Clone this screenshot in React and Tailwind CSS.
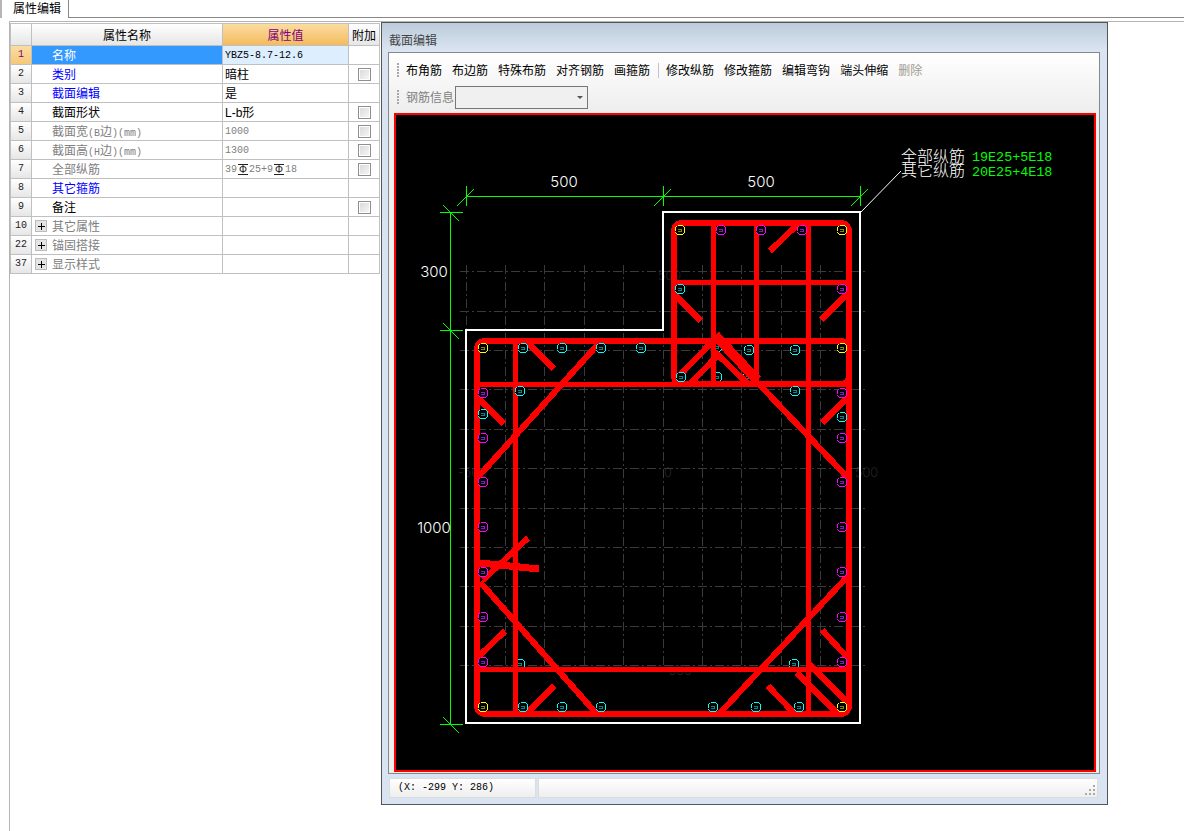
import React from "react";

const CJK = "font-['Liberation_Sans','Noto_Sans_CJK_SC',sans-serif]";
const MONO = "text-[10px] font-['Liberation_Mono',monospace]";

const rows = [
  { no: "1", name: "名称", value: "YBZ5-8.7-12.6", mono: true, selected: true },
  { no: "2", name: "类别", tone: "blue", value: "暗柱", check: true },
  { no: "3", name: "截面编辑", tone: "blue", value: "是" },
  { no: "4", name: "截面形状", value: "L-b形", check: true },
  { no: "5", name: ["截面宽", "(B", "边", ")(mm)"], tone: "gray", value: "1000", gray: true, check: true },
  { no: "6", name: ["截面高", "(H", "边", ")(mm)"], tone: "gray", value: "1300", gray: true, check: true },
  { no: "7", name: "全部纵筋", tone: "gray", rebar: true, check: true },
  { no: "8", name: "其它箍筋", tone: "blue" },
  { no: "9", name: "备注", check: true },
  { no: "10", name: "其它属性", tone: "gray", plus: true },
  { no: "22", name: "锚固搭接", tone: "gray", plus: true },
  { no: "37", name: "显示样式", tone: "gray", plus: true },
];

const tools = ["布角筋", "布边筋", "特殊布筋", "对齐钢筋", "画箍筋"];
const tools2 = ["修改纵筋", "修改箍筋", "编辑弯钩", "端头伸缩"];

// [x1, y1, x2, y2, width]
const bars = [
  [515, 341, 515, 714, 5],
  [713, 223, 713, 384, 5],
  [756, 223, 756, 384, 5],
  [808, 223, 808, 714, 5],
  [674, 282, 849, 282, 5],
  [477, 384, 849, 384, 5],
  [477, 669, 849, 669, 5],
  [770, 251, 797, 225, 5],
  [675, 295, 701, 321, 5],
  [821, 320, 848, 293, 5],
  [528, 343, 554, 369, 5],
  [478, 398, 504, 424, 5],
  [822, 423, 848, 397, 5],
  [600, 342, 478, 477, 5],
  [758, 383, 848, 478, 5],
  [677, 378, 713, 341, 5],
  [690, 384, 718, 355, 5],
  [715, 352, 748, 384, 5],
  [715, 335, 757, 380, 9],
  [480, 582, 595, 712, 5],
  [720, 713, 847, 577, 5],
  [478, 657, 505, 631, 5],
  [528, 712, 554, 686, 5],
  [480, 563, 539, 569, 6],
  [483, 580, 528, 538, 5],
  [768, 686, 793, 712, 5],
  [797, 673, 837, 713, 5],
  [808, 663, 848, 703, 5],
  [822, 630, 847, 657, 5],
];

const yellow = [[483, 348], [680, 230], [842, 230], [842, 348], [483, 707], [842, 707]];
const cyan = [
  [523, 348], [562, 348], [601, 348], [641, 348], [680, 289], [749, 350], [795, 350],
  [681, 377], [795, 391], [483, 414], [842, 417], [520, 391], [523, 707], [562, 707],
  [601, 707], [713, 707], [756, 707], [799, 707],
];
const cyanUnder = [[717, 347], [717, 377], [748, 377], [520, 664], [794, 664]];
const magenta = [
  [721, 230], [761, 230], [802, 230], [842, 289], [483, 393], [483, 438], [483, 482],
  [483, 527], [483, 572], [483, 617], [483, 662], [842, 393], [842, 438], [842, 482],
  [842, 527], [842, 572], [842, 617], [842, 662],
];

const gridX = [466, 505, 544, 584, 623, 663, 702, 741, 781, 820, 860];
const gridY = [271, 311, 350, 389, 429, 468, 508, 547, 586, 626, 665];

function Rebar({ x, y, color, core }) {
  return (
    <g>
      <circle cx={x} cy={y} r="5" fill="#000" stroke={color} strokeWidth="1" strokeDasharray="6 1" />
      <path d={`M${x - 2} ${y - 1}H${x + 1}V${y + 1}H${x - 2}`} fill="none" stroke={core} strokeWidth="1" />
    </g>
  );
}

function Tick({ x, y, dir }) {
  return dir === "h" ? (
    <path d={`M${x} ${y - 10}V${y + 10}M${x - 9} ${y + 10}L${x + 8} ${y - 7}`} />
  ) : (
    <path d={`M${x - 10} ${y}H${x + 13}M${x - 7} ${y - 7}L${x + 9} ${y + 9}`} />
  );
}

function Drawing() {
  return (
    <svg viewBox="396 115 698 655" className="block w-[698px] h-[655px]" shapeRendering="crispEdges">
      <g stroke="#3a3a3a" strokeWidth="1" strokeDasharray="9 3 2 3">
        {gridX.map((x) => (
          <line key={x} x1={x} y1="265" x2={x} y2="672" />
        ))}
        {gridY.map((y) => (
          <line key={y} x1="460" y1={y} x2="866" y2={y} />
        ))}
      </g>
      <g fill="#2f333c" fontSize="13" fontFamily="Inter, sans-serif" fontWeight="200" shapeRendering="auto">
        <text x="658" y="280">500</text>
        <text x="458" y="477">-500</text>
        <text x="855" y="477">500</text>
        <text x="663" y="675">-500</text>
        <text x="664" y="477">0</text>
      </g>

      <path d="M663 212H860V723H466V330H663Z" fill="none" stroke="#fff" strokeWidth="2" />
      <path d="M861 212L901 171" stroke="#fff" strokeWidth="1" shapeRendering="auto" />

      <g stroke="#00ff00" strokeWidth="1" fill="none">
        <path d="M466 196H860M450 212V724" />
        <Tick x={466} y={196} dir="h" />
        <Tick x={663} y={196} dir="h" />
        <Tick x={860} y={196} dir="h" />
        <Tick x={450} y={212} dir="v" />
        <Tick x={450} y={330} dir="v" />
        <Tick x={450} y={724} dir="v" />
      </g>

      {cyanUnder.map(([x, y]) => (
        <Rebar key={`${x}-${y}`} x={x} y={y} color="#00ffff" core="#008a8a" />
      ))}

      <g stroke="#ff0000" fill="none">
        <rect x="477" y="341" width="372" height="373" rx="8" strokeWidth="6" />
        <rect x="674" y="223" width="175" height="161" rx="8" strokeWidth="6" />
        {bars.map(([x1, y1, x2, y2, w], i) => (
          <line key={i} x1={x1} y1={y1} x2={x2} y2={y2} strokeWidth={x1 !== x2 && y1 !== y2 ? w + 1 : w} />
        ))}
      </g>

      {yellow.map(([x, y]) => (
        <Rebar key={`${x}-${y}`} x={x} y={y} color="#ffff00" core="#8a8a00" />
      ))}
      {cyan.map(([x, y]) => (
        <Rebar key={`${x}-${y}`} x={x} y={y} color="#00ffff" core="#008a8a" />
      ))}
      {magenta.map(([x, y]) => (
        <Rebar key={`${x}-${y}`} x={x} y={y} color="#ff00ff" core="#7a20c0" />
      ))}

      <g fill="#fff" fontFamily="Inter, sans-serif" fontWeight="300" fontSize="15" shapeRendering="auto" textAnchor="middle">
        <text x="564" y="187">500</text>
        <text x="761" y="187">500</text>
        <text x="434" y="277">300</text>
        <text x="434" y="533">1000</text>
      </g>
      <g fill="#fff" fontFamily="Noto Sans CJK SC, sans-serif" fontSize="16" fontWeight="300" shapeRendering="auto">
        <text x="901" y="162">全部纵筋</text>
        <text x="901" y="176">其它纵筋</text>
      </g>
      <g fill="#00ff00" fontFamily="Liberation Mono, monospace" fontSize="13.4" shapeRendering="auto">
        <text x="972" y="161">19E25+5E18</text>
        <text x="972" y="176">20E25+4E18</text>
      </g>
    </svg>
  );
}

function Grip() {
  return (
    <div className="flex flex-col gap-[1px] w-[2px] mr-[7px]">
      {[0, 1, 2, 3, 4].map((i) => (
        <span key={i} className="block w-[2px] h-[2px] bg-[#a8a8a8]" />
      ))}
    </div>
  );
}

function Check() {
  return (
    <span className="block w-[13px] h-[13px] border border-[#8f8f8f] bg-gradient-to-br from-[#d8d8d8] to-[#f8f8f8] outline outline-1 -outline-offset-2 outline-white" />
  );
}

function Plus() {
  return (
    <span className="flex items-center justify-center w-[12px] h-[12px] mr-[5px] -mt-[2px] bg-[#e4e4e4] border border-[#bbb] text-black">
      <span className="relative block w-[7px] h-[7px]">
        <span className="absolute left-0 top-[3px] w-[7px] h-[1px] bg-black" />
        <span className="absolute left-[3px] top-0 w-[1px] h-[7px] bg-black" />
      </span>
    </span>
  );
}

function RebarMark() {
  return (
    <span className="inline-block align-middle w-[10px] h-[11px] mx-[1px] leading-[9px] text-center border-y border-[#222] text-[10px] text-[#111] font-['Liberation_Sans',sans-serif]">
      Φ
    </span>
  );
}

function Row({ row }) {
  const nameColor =
    row.tone === "blue" ? "text-[#0000ff]" : row.tone === "gray" ? "text-[#808080]" : "text-black";
  return (
    <div className="flex h-[19px] border-b border-[#c0c0c0]">
      <div
        className={`w-[21px] shrink-0 flex items-center justify-center border-r border-[#c0c0c0] ${MONO} ${
          row.selected
            ? "bg-gradient-to-b from-[#fbdca0] to-[#f6c878] text-[#800080]"
            : "bg-gradient-to-b from-white to-[#e6e6e6] text-[#222]"
        }`}
      >
        {row.no}
      </div>
      <div
        className={`w-[191px] shrink-0 flex items-center pt-[2px] border-r border-[#c0c0c0] ${
          row.plus ? "pl-[3px]" : "pl-[20px]"
        } ${row.selected ? "bg-[#3399ff] text-white" : nameColor}`}
      >
        {row.plus && <Plus />}
        {Array.isArray(row.name) ? (
          <span>
            {row.name[0]}
            <span className={MONO}>{row.name[1]}</span>
            {row.name[2]}
            <span className={MONO}>{row.name[3]}</span>
          </span>
        ) : (
          row.name
        )}
      </div>
      <div
        className={`w-[126px] shrink-0 flex items-center pt-[2px] border-r border-[#c0c0c0] pl-[2px] ${
          row.selected ? "bg-[#ddeeff]" : ""
        } ${row.gray || row.rebar ? "text-[#808080]" : "text-black"}`}
      >
        {row.mono && <span className={MONO}>{row.value}</span>}
        {row.gray && <span className={MONO}>{row.value}</span>}
        {row.rebar && (
          <span className={MONO}>
            39<RebarMark />25+9<RebarMark />18
          </span>
        )}
        {!row.mono && !row.gray && !row.rebar && row.value}
      </div>
      <div className="w-[31px] shrink-0 flex items-center justify-center border-r border-[#c0c0c0]">
        {row.check && <Check />}
      </div>
    </div>
  );
}

export default function App() {
  return (
    <div className={`w-[1184px] h-[831px] overflow-hidden bg-white text-[12px] leading-none text-black ${CJK}`}>
      {/* Tab strip */}
      <div className="flex h-[18px] pl-[4px] border-l-2 border-[#b5b5b5]">
        <div className="w-[63px] h-[18px] flex items-center justify-center bg-white border-r border-[#888]">
          属性编辑
        </div>
        <div className="flex-1 border-b border-[#888]" />
      </div>

      <div className="flex h-[813px] mt-[3px] ml-[9px] border-t border-l border-[#b5b5b5]">
        {/* Property grid */}
        <div className="w-[370px] shrink-0 mt-[1px] self-start border-t border-l border-[#c0c0c0]">
          <div className="flex h-[22px] border-b border-[#c0c0c0]">
            <div className="w-[21px] shrink-0 border-r border-[#c0c0c0] bg-gradient-to-b from-white to-[#e6e6e6]" />
            <div className="w-[191px] shrink-0 flex items-center justify-center pt-[2px] border-r border-[#c0c0c0] bg-gradient-to-b from-white to-[#e6e6e6]">
              属性名称
            </div>
            <div className="w-[126px] shrink-0 flex items-center justify-center pt-[2px] border-r border-[#c0c0c0] bg-gradient-to-b from-[#fbdca0] to-[#f3bb5c] text-[#800080]">
              属性值
            </div>
            <div className="w-[31px] shrink-0 flex items-center justify-center pt-[2px] border-r border-[#c0c0c0] bg-gradient-to-b from-white to-[#e6e6e6]">
              附加
            </div>
          </div>
          {rows.map((row) => (
            <Row key={row.no} row={row} />
          ))}
        </div>

        {/* Section editor window */}
        <div className="w-[727px] h-[783px] shrink-0 ml-[1px] flex flex-col border border-[#555] bg-[#d8e4f2]">
          <div className="h-[29px] shrink-0 flex items-center pl-[7px] pt-[7px] text-[#444] bg-gradient-to-b from-[#bccbda] to-[#dbe6f3]">
            截面编辑
          </div>
          <div className="w-[712px] h-[722px] ml-[6px] pt-[4px] pl-[5px] border border-[#888] bg-gradient-to-b from-white to-[#eeeeee] to-[8%]">
            <div className="flex items-center h-[26px] pl-[3px]">
              <Grip />
              <div className="flex items-center gap-[10px] pt-[2px]">
                {tools.map((t) => (
                  <span key={t}>{t}</span>
                ))}
              </div>
              <span className="w-[1px] h-[15px] bg-[#c4c4c4] ml-[8px] mr-[7px]" />
              <div className="flex items-center gap-[10px] pt-[2px]">
                {tools2.map((t) => (
                  <span key={t}>{t}</span>
                ))}
                <span className="text-[#a09a90]">删除</span>
              </div>
            </div>
            <div className="flex items-center h-[26px] mt-[1px] pl-[3px]">
              <Grip />
              <span className="text-[#808080] pt-[2px]">钢筋信息</span>
              <div className="w-[133px] h-[23px] ml-[1px] flex items-center justify-end pr-[4px] border border-[#777] bg-[#f0f0f0]">
                <span className="w-0 h-0 border-x-[3px] border-x-transparent border-t-[3px] border-t-[#555]" />
              </div>
            </div>
            <div className="w-[702px] h-[659px] mt-[3px] border-2 border-[#ff0000] bg-black">
              <Drawing />
            </div>
          </div>
          <div className="flex gap-[2px] h-[20px] mt-[4px] ml-[7px]">
            <div className={`w-[147px] flex items-center pl-[8px] border border-[#dcdcdc] bg-gradient-to-b from-white to-[#eeeeee] ${MONO}`}>
              (X: -299 Y: 286)
            </div>
            <div className="relative w-[560px] border border-[#dcdcdc] bg-gradient-to-b from-white to-[#eeeeee]">
              <span className="absolute right-[2px] bottom-[2px] w-[2px] h-[2px] bg-[#aaa] shadow-[-4px_0_0_#aaa,-8px_0_0_#aaa,0_-4px_0_#aaa,-4px_-4px_0_#aaa,0_-8px_0_#aaa]" />
            </div>
          </div>
        </div>
      </div>
    </div>
  );
}
